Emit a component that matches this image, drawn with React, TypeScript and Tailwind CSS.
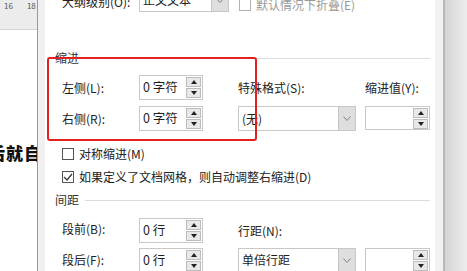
import React from 'react'

const font = { fontFamily: '"Noto Sans CJK SC", "Microsoft YaHei", "Noto Sans", sans-serif' }

const Spin = () => (
  <div className="flex flex-col gap-[1px] mr-[1px]">
    <div className="w-[15px] h-[10px] bg-[#e8e8e8] border border-[#bcbcbc] flex items-center justify-center">
      <svg width="6" height="4" viewBox="0 0 6 4">
        <polygon points="0,4 3,0 6,4" fill="#222" />
      </svg>
    </div>
    <div className="w-[15px] h-[10px] bg-[#e8e8e8] border border-[#bcbcbc] flex items-center justify-center">
      <svg width="6" height="4" viewBox="0 0 6 4">
        <polygon points="0,0 6,0 3,4" fill="#222" />
      </svg>
    </div>
  </div>
)

const SpinInput = ({ value, w = 'w-[64px]', h = 'h-[25px]' }: { value: string; w?: string; h?: string }) => (
  <div className={`${w} ${h} border border-[#c8c8c8] bg-white flex items-center justify-between`}>
    <span className="pl-[3px] text-[12.5px] text-[#1e1e1e]">{value}</span>
    <Spin />
  </div>
)

const Select = ({ value, w, h = 'h-[25px]' }: { value: string; w: string; h?: string }) => (
  <div className={`${w} ${h} border border-[#c8c8c8] bg-white flex items-stretch`}>
    <span className="flex-1 pl-[3px] flex items-center text-[12px] text-[#1e1e1e]">{value}</span>
    <div className="w-[17px] bg-[#dedede] border-l border-[#c4c4c4] flex items-center justify-center">
      <svg width="8" height="5" viewBox="0 0 8 5">
        <polyline points="0.5,0.5 4,4.5 7.5,0.5" fill="none" stroke="#808080" strokeWidth="1" />
      </svg>
    </div>
  </div>
)

const Check = ({ checked, muted }: { checked?: boolean; muted?: boolean }) => (
  <div
    className={`w-[12px] h-[12px] border bg-white flex items-center justify-center ${
      muted ? 'border-[#b0b0b0]' : 'border-[#555]'
    }`}
  >
    {checked && (
      <svg width="10" height="8" viewBox="0 0 10 8">
        <polyline points="1,4 4,7 9,1" fill="none" stroke="#333" strokeWidth="1.2" />
      </svg>
    )}
  </div>
)

const Header = ({ title }: { title: string }) => (
  <div className="h-[14px] flex items-center gap-[6px] pl-[5px]">
    <span className="text-[12px] text-[#333] leading-none">{title}</span>
    <div className="flex-1 h-[1px] bg-[#dcdcdc] mr-[5px]" />
  </div>
)

export default function App() {
  return (
    <div className="w-[467px] h-[271px] overflow-hidden flex bg-white" style={font}>
      {/* document */}
      <div className="w-[37px] shrink-0 flex flex-col overflow-hidden">
        <div className="h-[30px] bg-[#ececec] border-b border-[#d4d4d4] flex gap-[14px] pl-[4px] pt-[2px] text-[8px] text-[#555] leading-none whitespace-nowrap">
          <span>16</span>
          <span>18</span>
        </div>
        <div className="flex justify-end mt-[110px] mr-[-5px]">
          <span className="whitespace-nowrap text-[17px] font-black text-[#111] tracking-[1px]">后就自</span>
        </div>
      </div>
      <div className="w-[1px] shrink-0 bg-[#9a9a9a]" />
      <div className="w-[7px] shrink-0 bg-[#f0f0f0]" />

      {/* dialog */}
      <div className="w-[390px] shrink-0 relative flex flex-col pl-[17px]">
        {/* top row */}
        <div className="h-[24px] mt-[-12px] flex items-center">
          <span className="w-[77px] text-[12px] text-[#222] pt-[4px]">大纲级别(O):</span>
          <Select value="正文文本" w="w-[90px]" h="h-[24px]" />
          <div className="flex items-center gap-[5px] ml-[10px] pt-[4px] self-start mt-[4px]">
            <Check muted />
            <span className="text-[12px] text-[#9a9a9a]">默认情况下折叠(E)</span>
          </div>
        </div>

        {/* indent */}
        <div className="mt-[39px] -ml-[12px]">
          <Header title="缩进" />
        </div>
        <div className="mt-[10px] flex h-[25px]">
          <div className="w-[176px] flex items-center">
            <span className="w-[77px] text-[12px] text-[#222]">左侧(L):</span>
            <SpinInput value="0 字符" />
          </div>
          <div className="w-[127px] flex items-center text-[12px] text-[#222]">特殊格式(S):</div>
          <div className="flex items-center text-[12px] text-[#222]">缩进值(Y):</div>
        </div>
        <div className="mt-[6px] flex h-[25px]">
          <div className="w-[176px] flex items-center">
            <span className="w-[77px] text-[12px] text-[#222]">右侧(R):</span>
            <SpinInput value="0 字符" />
          </div>
          <div className="w-[127px]">
            <Select value="(无)" w="w-[118px]" />
          </div>
          <SpinInput value="" w="w-[65px]" h="h-[24px]" />
        </div>

        <div className="mt-[16px] h-[14px] flex items-center gap-[5px]">
          <Check />
          <span className="text-[12px] text-[#222]">对称缩进(M)</span>
        </div>
        <div className="mt-[9px] h-[14px] flex items-center gap-[5px]">
          <Check checked />
          <span className="text-[12px] text-[#222] whitespace-nowrap">如果定义了文档网格，则自动调整右缩进(D)</span>
        </div>

        {/* spacing */}
        <div className="mt-[9px] -ml-[12px]">
          <Header title="间距" />
        </div>
        <div className="mt-[11px] flex h-[25px]">
          <div className="w-[176px] flex items-center">
            <span className="w-[77px] text-[12px] text-[#222] pb-[4px]">段前(B):</span>
            <SpinInput value="0 行" />
          </div>
          <div className="w-[127px] flex items-center text-[12px] text-[#222]">行距(N):</div>
        </div>
        <div className="mt-[5px] flex h-[24px]">
          <div className="w-[176px] flex items-center">
            <span className="w-[77px] text-[12px] text-[#222]">段后(F):</span>
            <SpinInput value="0 行" h="h-[24px]" />
          </div>
          <div className="w-[127px]">
            <Select value="单倍行距" w="w-[118px]" h="h-[24px]" />
          </div>
          <SpinInput value="" w="w-[65px]" h="h-[24px]" />
        </div>

        {/* red annotation */}
        <div className="absolute left-[2px] top-[57px] w-[210px] h-[84px] border-[2.5px] border-[#e3211c] rounded-[3px] pointer-events-none" />
      </div>

      {/* right edge */}
      <div className="w-[8px] shrink-0 bg-[#f2f2f2]" />
      <div className="w-[2px] shrink-0 bg-[#b8b8b8]" />
      <div className="flex-1 bg-gradient-to-r from-[#d4d4d4] to-[#eeeeee]" />
    </div>
  )
}
